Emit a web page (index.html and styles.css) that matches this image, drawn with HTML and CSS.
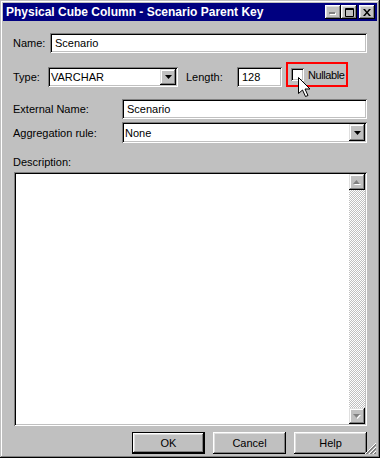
FILE: index.html
```html
<!DOCTYPE html>
<html lang="en">
<head>
  <meta charset="UTF-8" />
  <title>Physical Cube Column - Scenario Parent Key</title>
  <link rel="stylesheet" href="styles.css">
</head>
<body>
  <div class="window">
    <div class="titlebar">
      <span class="title">Physical Cube Column - Scenario Parent Key</span>
      <span class="tb-btn">
        <svg width="8" height="8" viewBox="0 0 8 8"><rect x="1" y="5" width="6" height="2" fill="#fff"/><rect x="0" y="4" width="6" height="2" fill="#808080"/></svg>
      </span>
      <span class="tb-btn">
        <svg width="9" height="9" viewBox="0 0 9 9"><path d="M0.5 0.5h8v8h-8z M0 1.5h9" stroke="#000" fill="none"/></svg>
      </span>
      <span class="tb-btn close">
        <svg width="8" height="7" viewBox="0 0 8 7"><path d="M0 0h2l2 2.5 2-2.5h2l-3 3.5 3 3.5h-2l-2-2.5-2 2.5h-2l3-3.5z" fill="#000"/></svg>
      </span>
    </div>

    <div class="content">
      <div class="row row-name">
        <label class="lbl lbl-name">Name:</label>
        <div class="field grow">Scenario</div>
      </div>

      <div class="row row-type">
        <label class="lbl lbl-type">Type:</label>
        <div class="field combo combo-type">
          <span class="combo-text">VARCHAR</span>
          <span class="drop-btn"><svg width="7" height="4" viewBox="0 0 7 4"><path d="M0 0h7l-3.5 4z" fill="#000"/></svg></span>
        </div>
        <label class="lbl lbl-length">Length:</label>
        <div class="field len">128</div>
        <div class="highlight">
          <span class="nullable">
            <span class="checkbox"></span>
            <span class="null-text">Nullable</span>
            <svg class="cursor" width="12" height="20" viewBox="0 0 12 20"><path d="M0.5 0.5v16l4-3.5 3 6.5 2.5-1-3-6.5h5z" fill="#fff" stroke="#000" stroke-linejoin="miter"/></svg>
          </span>
        </div>
      </div>

      <div class="row row-ext">
        <label class="lbl lbl-wide">External Name:</label>
        <div class="field grow">Scenario</div>
      </div>

      <div class="row row-agg">
        <label class="lbl lbl-wide">Aggregation rule:</label>
        <div class="field combo grow tall">
          <span class="combo-text">None</span>
          <span class="drop-btn"><svg width="7" height="4" viewBox="0 0 7 4"><path d="M0 0h7l-3.5 4z" fill="#000"/></svg></span>
        </div>
      </div>

      <div class="desc-label">Description:</div>
      <div class="desc">
        <div class="vscroll">
          <span class="scroll-btn"><svg width="8" height="5" viewBox="0 0 8 5"><path d="M1 5h7l-3.5-4z" fill="#fff"/><path d="M0 4h7l-3.5-4z" fill="#808080"/></svg></span>
          <span class="scroll-btn"><svg width="8" height="5" viewBox="0 0 8 5"><path d="M1 1h7l-3.5 4z" fill="#fff"/><path d="M0 0h7l-3.5 4z" fill="#808080"/></svg></span>
        </div>
      </div>

      <div class="buttons">
        <span class="btn default">OK</span>
        <span class="btn">Cancel</span>
        <span class="btn">Help</span>
      </div>
    </div>

    <svg class="grip" width="12" height="12" viewBox="0 0 12 12">
      <path d="M11 1L1 11M11 5L5 11M11 9L9 11" stroke="#808080"/>
      <path d="M11 2L2 11M11 6L6 11M11 10L10 11" stroke="#808080"/>
      <path d="M11 0L0 11M11 4L4 11M11 8L8 11" stroke="#fff"/>
    </svg>
  </div>
</body>
</html>
```

FILE: styles.css
```css
body {
  margin: 0;
  font-family: "Liberation Sans", Arial, sans-serif;
  font-size: 11px;
  color: #000;
  background: #c0c0c0;
}
.window {
  position: relative;
  width: 380px;
  height: 458px;
  box-sizing: border-box;
  padding: 3px;
  background: #c0c0c0;
  box-shadow: inset -1px -1px #000, inset 1px 1px #c0c0c0,
              inset -2px -2px #808080, inset 2px 2px #fff;
  display: flex;
  flex-direction: column;
}

/* title bar */
.titlebar {
  height: 18px;
  background: #000080;
  color: #fff;
  display: flex;
  align-items: center;
  padding: 0 2px 0 3px;
}
.title {
  flex: 1;
  font-weight: bold;
  font-size: 12px;
  white-space: nowrap;
}
.tb-btn {
  width: 16px;
  height: 14px;
  background: #c0c0c0;
  box-shadow: inset -1px -1px #000, inset 1px 1px #fff,
              inset -2px -2px #808080, inset 2px 2px #dfdfdf;
  display: flex;
  align-items: center;
  justify-content: center;
}
.tb-btn svg { display: block; }
.tb-btn.close { margin-left: 2px; }

/* dialog body */
.content {
  flex: 1;
  display: flex;
  flex-direction: column;
  padding: 12px 10px 0 10px;
}
.row {
  display: flex;
  align-items: center;
}
.row-type { margin-top: 14px; }
.row-ext { margin-top: 12px; }
.row-agg { margin-top: 3px; }

.lbl { flex: none; }
.lbl-name { width: 37px; }
.lbl-type { width: 35px; }
.lbl-length { width: 51px; margin-left: 8px; }
.lbl-wide { width: 109px; }

.field {
  box-sizing: border-box;
  height: 20px;
  background: #fff;
  box-shadow: inset 1px 1px #808080, inset -1px -1px #fff,
              inset 2px 2px #000, inset -2px -2px #c0c0c0;
  padding: 0 5px;
  display: flex;
  align-items: center;
  white-space: nowrap;
}
.grow { flex: 1; }
.tall { height: 21px; }
.len { width: 45px; }

.combo {
  padding: 2px;
  justify-content: space-between;
}
.combo-type { width: 130px; }
.combo-text { padding-left: 1px; }
.drop-btn {
  width: 16px;
  height: 16px;
  box-sizing: border-box;
  background: #c0c0c0;
  box-shadow: inset -1px -1px #000, inset 1px 1px #dfdfdf,
              inset -2px -2px #808080, inset 2px 2px #fff;
  display: flex;
  align-items: center;
  justify-content: center;
}
.tall .drop-btn { height: 17px; }
.drop-btn svg { display: block; }

/* highlighted Nullable checkbox */
.highlight {
  align-self: flex-start;
  margin: -5px 0 0 4px;
  width: 62px;
  height: 25px;
  box-sizing: border-box;
  border: 2px solid #f00;
  padding-left: 3px;
  display: flex;
  align-items: center;
  overflow: visible;
}
.nullable {
  position: relative;
  display: flex;
  align-items: center;
  gap: 4px;
}
.null-text {
  letter-spacing: -0.4px;
  white-space: nowrap;
}
.checkbox {
  flex: none;
  width: 13px;
  height: 13px;
  box-sizing: border-box;
  background: #fff;
  box-shadow: inset 1px 1px #808080, inset -1px -1px #fff,
              inset 2px 2px #000, inset -2px -2px #c0c0c0;
}
.cursor {
  position: absolute;
  left: 7px;
  top: 9px;
}

.desc-label {
  margin-top: 13px;
  line-height: 13px;
}
.desc {
  margin: 3px 0 0 1px;
  height: 254px;
  box-sizing: border-box;
  padding: 2px;
  background: #fff;
  box-shadow: inset 1px 1px #808080, inset -1px -1px #fff,
              inset 2px 2px #000, inset -2px -2px #c0c0c0;
  display: flex;
  justify-content: flex-end;
}
.vscroll {
  width: 16px;
  display: flex;
  flex-direction: column;
  justify-content: space-between;
  background: repeating-conic-gradient(#fff 0 25%, #c0c0c0 0 50%) 0 0 / 2px 2px;
}
.scroll-btn {
  width: 16px;
  height: 16px;
  box-sizing: border-box;
  background: #c0c0c0;
  box-shadow: inset -1px -1px #000, inset 1px 1px #dfdfdf,
              inset -2px -2px #808080, inset 2px 2px #fff;
  display: flex;
  align-items: center;
  justify-content: center;
}
.scroll-btn svg { display: block; }

.buttons {
  margin-top: 6px;
  display: flex;
  justify-content: flex-end;
  gap: 8px;
}
.btn {
  width: 73px;
  height: 22px;
  box-sizing: border-box;
  background: #c0c0c0;
  box-shadow: inset -1px -1px #000, inset 1px 1px #fff,
              inset -2px -2px #808080, inset 2px 2px #dfdfdf;
  display: flex;
  align-items: center;
  justify-content: center;
}
.btn.default {
  border: 1px solid #000;
}

.grip {
  position: absolute;
  right: 3px;
  bottom: 3px;
}
```
